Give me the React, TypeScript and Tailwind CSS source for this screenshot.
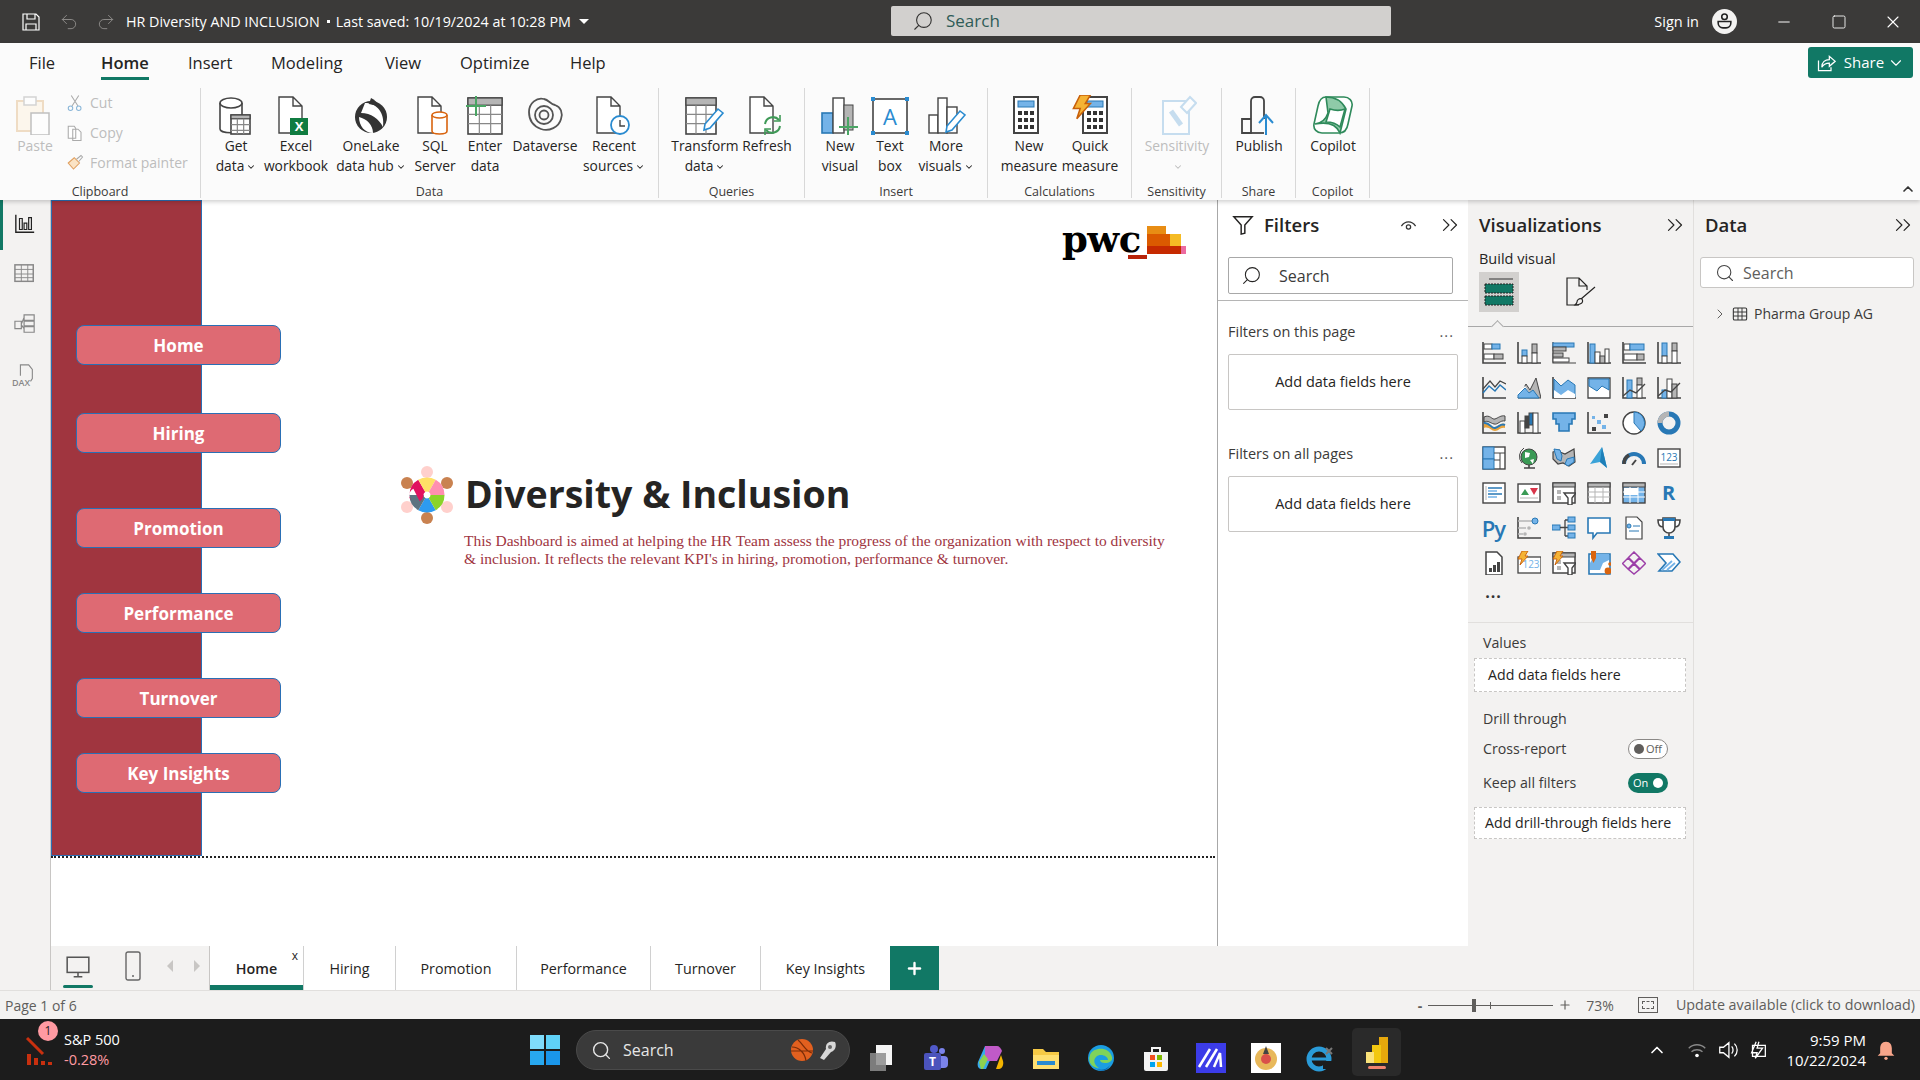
import type { ReactNode } from "react";
import { ChevronDown, ChevronRight, ChevronUp, ChevronsRight, Minus, Plus, Redo2, Search, Square, Undo2, X } from "lucide-react";

const D = "#444444";
const B = "#74b3e8";
const S = "#2878b5";
const G = "#b5b5b5";
const Y = "#e8a33d";

const Ic = ({ size = 24, view = 24, children }: { size?: number; view?: number; children: ReactNode }) => (
  <svg width={size} height={size} viewBox={`0 0 ${view} ${view}`} fill="none" className="shrink-0">
    {children}
  </svg>
);

const Axis = () => <path d="M1 1v21h23" stroke={D} strokeWidth="1.6" />;
const Bar = ({ x, y, w, h, c = "#fff", s = D }: { x: number; y: number; w: number; h: number; c?: string; s?: string }) => (
  <rect x={x} y={y} width={w} height={h} fill={c} stroke={s} strokeWidth="1" />
);
const Bolt = ({ x = 0, y = 0 }: { x?: number; y?: number }) => (
  <path transform={`translate(${x} ${y})`} d="M5 0h6L8 5h3L3 14l2-6H1z" fill="#f5b335" stroke="#c8600a" strokeWidth=".9" />
);
const Slicer = () => (
  <>
    <rect x="1" y="2" width="22" height="20" fill="#fff" stroke={D} strokeWidth="1.5" />
    <rect x="1" y="2" width="22" height="4" fill={G} stroke={D} />
    <rect x="5" y="9" width="4" height="4" fill={G} />
    <rect x="5" y="15" width="4" height="4" fill={G} />
    <path d="M12 12h12l-4 5v7h-4v-7z" fill="#fff" stroke={D} strokeWidth="1.4" />
  </>
);

// Visualization pane, row by row
const vizIcons: ReactNode[] = [
  <><Axis /><Bar x={2} y={3} w={8} h={5} /><Bar x={10} y={3} w={8} h={5} c={B} s={S} /><Bar x={2} y={13} w={10} h={5} /><Bar x={12} y={13} w={9} h={5} c={G} /></>,
  <><Axis /><Bar x={5} y={9} w={5} h={6} c={B} s={S} /><Bar x={5} y={15} w={5} h={7} /><Bar x={15} y={3} w={5} h={9} c={G} /><Bar x={15} y={12} w={5} h={10} /></>,
  <><path d="M1 1v21h23" stroke={D} strokeWidth="1.2" /><Bar x={1} y={2} w={21} h={4} c={B} s={S} /><Bar x={1} y={6} w={13} h={4} c={G} /><Bar x={1} y={12} w={10} h={4} c={G} /><Bar x={1} y={17} w={16} h={4} /></>,
  <><Axis /><Bar x={3} y={3} w={5} h={19} c={B} s={S} /><Bar x={8} y={11} w={5} h={11} /><Bar x={13} y={15} w={5} h={7} c={G} /><Bar x={18} y={8} w={4} h={14} /></>,
  <><Axis /><Bar x={2} y={3} w={6} h={6} /><Bar x={8} y={3} w={14} h={6} c={B} s={S} /><Bar x={2} y={13} w={13} h={6} /><Bar x={15} y={13} w={7} h={6} c={G} /></>,
  <><Axis /><Bar x={5} y={2} w={5} h={13} c={B} s={S} /><Bar x={5} y={15} w={5} h={7} /><Bar x={15} y={2} w={5} h={8} c={G} /><Bar x={15} y={10} w={5} h={12} /></>,
  <><Axis /><path d="M1 17l6-7 6 5 5-6 6 5" stroke={S} strokeWidth="1.4" /><path d="M1 13l7-8 5 6 5-6 6 3" stroke={D} strokeWidth="1.2" /></>,
  <><path d="M1 22L9 8l4 6 6-12 5 20z" fill={G} stroke={D} /><path d="M1 22v-6l7-6 7 12z" fill="#fff" /><path d="M1 22v-3l7-7 4 5 4-3 6 8z" fill={B} stroke={S} /></>,
  <><Axis /><path d="M2 3l7 7 7-6 7 5v12H2z" fill={B} stroke={S} /><path d="M2 14l7 5 7-5 7 4v4H2z" fill="#fff" /></>,
  <><path d="M1 2h22v20H1z" fill="#fff" stroke={D} strokeWidth="1.3" /><path d="M2 3h20v11l-7-4-5 5-8-5z" fill={B} stroke={S} /></>,
  <><Axis /><Bar x={5} y={4} w={5} h={18} c={B} s={S} /><Bar x={15} y={2} w={5} h={7} c={G} /><Bar x={15} y={9} w={5} h={13} /><path d="M1 20l7-6 6 3 9-9" stroke={D} strokeWidth="1.4" /></>,
  <><Axis /><Bar x={5} y={14} w={5} h={8} c={B} s={S} /><Bar x={10} y={3} w={5} h={19} /><Bar x={15} y={8} w={5} h={14} c={G} /><path d="M1 20l7-6 6 2 9-9" stroke={D} strokeWidth="1.4" /></>,
  <><Axis /><path d="M2 6c6-3 8 3 11 2s6-4 10-3v5c-5-1-7 4-11 3S6 9 2 11z" fill={G} stroke={D} /><path d="M2 13c5-2 7 4 11 3s6-5 10-3v4c-5-1-6 3-10 3s-6-5-11-3z" fill={Y} /><path d="M2 12c6-1 7 6 11 5s6-5 10-3" stroke={S} strokeWidth="2" /></>,
  <><Axis /><Bar x={3} y={10} w={5} h={12} /><Bar x={8} y={5} w={4} h={12} c={D} /><Bar x={12} y={2} w={4} h={12} c={S} /><Bar x={16} y={2} w={5} h={20} /></>,
  <path d="M1 2h22v6h-3v5h-3v7H7v-7H4V8H1z" fill={B} stroke={S} strokeWidth="1.6" />,
  <><Axis /><rect x="5" y="16" width="4" height="4" fill={D} /><rect x="5" y="5" width="3" height="3" fill={B} /><rect x="10" y="9" width="4" height="4" fill={B} /><rect x="15" y="14" width="4" height="4" fill={B} /><rect x="17" y="3" width="4" height="4" fill={D} /></>,
  <><circle cx="12" cy="12" r="11" fill="#fff" stroke={D} strokeWidth="1.4" /><path d="M12 1a11 11 0 0 1 7 19l-7-8z" fill={B} stroke={S} /></>,
  <><circle cx="12" cy="12" r="9" stroke={S} strokeWidth="5" /><path d="M12 3a9 9 0 0 0-9 9" stroke={G} strokeWidth="5" /></>,
  <><rect x="1" y="1" width="22" height="22" fill="#fff" stroke={D} strokeWidth="1.4" /><rect x="1" y="1" width="11" height="12" fill={B} stroke={S} /><rect x="1" y="13" width="11" height="10" fill={B} stroke={S} /><path d="M12 7h11M18 7v16M12 14h6" stroke={D} /></>,
  <><circle cx="12" cy="11" r="8" fill="#3a9a55" stroke={D} /><path d="M8 6l5 1-1 4-4 1zM13 14l4-1-1 5z" fill="#fff" /><path d="M7 22h11M12 19v3" stroke={D} strokeWidth="1.6" /><path d="M7 2a10 10 0 0 0-2 15" stroke={D} /></>,
  <><path d="M1 6l6-2 1 2 5 2 9-5 1 13-6 4-6-3-5 1-5-5z" fill={G} stroke={D} strokeWidth="1.2" /><path d="M2 3l6 1 2 6-1 5-4-2-2-6z" fill={B} stroke={S} /><path d="M13 18l2-5 7-2 0 5-6 4z" fill={B} stroke={S} /></>,
  <><path d="M15 1l5 21-7-6-10 2z" fill="#3ba3d8" /><path d="M15 1l-2 15 7 6z" fill="#1d7fb8" /></>,
  <><path d="M2 18a10 10 0 0 1 20 0" stroke={S} strokeWidth="4" /><path d="M2 18a10 10 0 0 1 5-9" stroke={D} strokeWidth="3.5" /><path d="M10 19l4-5" stroke={D} strokeWidth="2" /></>,
  <><rect x="1" y="3" width="22" height="18" fill="#fff" stroke={D} strokeWidth="1.4" /><text x="12" y="15" textAnchor="middle" fontSize="10" fill={S} fontFamily="Open Sans">123</text><path d="M3 18h18" stroke={G} /></>,
  <><rect x="1" y="2" width="22" height="20" fill="#fff" stroke={D} strokeWidth="1.4" /><path d="M4 5v14" stroke={G} /><path d="M6 7h14M6 13h14" stroke={S} strokeWidth="1.6" /><path d="M6 10h9M6 16h9" stroke={B} strokeWidth="1.4" /></>,
  <><rect x="1" y="3" width="22" height="18" fill="#fff" stroke={D} strokeWidth="1.4" /><path d="M4 14l4-6 4 6z" fill="#3a9a55" /><path d="M13 7h8l-4 7z" fill="#d9354a" /><path d="M3 17h18" stroke={G} /></>,
  <Slicer />,
  <><rect x="1" y="2" width="22" height="20" fill="#fff" stroke={D} strokeWidth="1.4" /><rect x="1" y="2" width="22" height="4" fill={G} stroke={D} /><path d="M8 6v16M16 6v16M1 11h22M1 16h22" stroke={G} /></>,
  <><rect x="1" y="2" width="22" height="20" fill={B} stroke={D} strokeWidth="1.4" /><rect x="1" y="2" width="22" height="4" fill={G} stroke={D} /><rect x="2" y="7" width="14" height="7" fill="#fff" /><path d="M8 6v16M16 6v16M1 11h22M1 16h22" stroke="#fff" /></>,
  <span className="text-[20px] font-bold leading-none text-[#2878b5]">R</span>,
  <span className="text-[22px] font-semibold leading-none text-[#2878b5] tracking-[-1px]">Py</span>,
  <><Axis /><path d="M1 5h14M1 12h8M1 18h5" stroke={G} strokeWidth="1.6" /><circle cx="18" cy="5" r="3" fill={B} stroke={S} /><circle cx="12" cy="12" r="1.8" fill={G} /><circle cx="8" cy="18" r="1.8" fill={G} /></>,
  <><rect x="0" y="9" width="8" height="5" fill={B} stroke={S} /><path d="M8 11.5h5M13 4v16M13 4h3M13 11.5h3M13 20h3" stroke={D} strokeWidth="1.3" /><rect x="16" y="1" width="7" height="5" fill={B} stroke={S} /><rect x="16" y="9" width="7" height="5" fill={B} stroke={S} /><rect x="16" y="17" width="7" height="5" fill={B} stroke={S} /></>,
  <path d="M1 2h22v15H10l-4 5v-5H1z" fill="#fff" stroke={S} strokeWidth="1.6" />,
  <><path d="M4 1h11l5 5v17H4z" fill="#fff" stroke={D} strokeWidth="1.2" /><circle cx="7" cy="10" r="2" fill={B} stroke={S} /><path d="M11 10h7M7 15h10" stroke={S} /></>,
  <><path d="M6 2h12v9a6 6 0 0 1-12 0zM6 4H1c0 5 2 7 5 7M18 4h5c0 5-2 7-5 7M12 17v3" stroke={D} strokeWidth="1.6" fill="#fff" /><rect x="6" y="2" width="12" height="3" fill={S} /><rect x="7" y="20" width="10" height="3" fill={S} /></>,
  <><path d="M4 1h11l5 5v18H4z" fill="#fff" stroke={D} strokeWidth="1.5" /><rect x="7" y="17" width="3" height="4" fill={D} /><rect x="11" y="14" width="3" height="7" fill={D} /><rect x="15" y="11" width="3" height="10" fill={D} /></>,
  <><rect x="1" y="6" width="23" height="16" fill="#fff" stroke={D} strokeWidth="1.3" /><text x="14" y="17" textAnchor="middle" fontSize="10" fill={B} fontFamily="Open Sans">123</text><Bolt /></>,
  <><Slicer /><Bolt /></>,
  <><path d="M2 3h21v20H2z" fill="#fff" stroke={S} strokeWidth="1.6" /><path d="M8 3h14v6l-6 3-3 7H3v-7z" fill={B} /><path d="M4 0h5v7l-2.5 5L4 7z" fill="#d9640f" /><circle cx="21" cy="20" r="3.4" fill="#d9640f" /><circle cx="23" cy="13" r="1.8" fill="#d9640f" /></>,
  <path d="M12 1l5.5 5.500L12 12 6.500 6.500zM6 7l5.500 5.500L6 18 .5 12.500zM18 7l5.500 5.500L18 18l-5.500-5.500zM12 13l5.500 5.500L12 23l-5.500-4.500z" stroke="#9c3fa8" strokeWidth="1.5" />,
  <><path d="M1 3h15l7 8-8 9H2l7-8z" stroke={S} strokeWidth="1.6" fill="#fff" /><path d="M5 19l10-9M10 19l8-7" stroke={B} strokeWidth="1.8" /></>,
];

const RibDoc = () => <path d="M3 2h14l9 9v27H3z M17 2v9h9" fill="#fff" stroke={D} strokeWidth="1.4" />;
const RibTable = ({ x, y, w, h }: { x: number; y: number; w: number; h: number }) => (
  <g stroke={D} strokeWidth="1.2">
    <rect x={x} y={y} width={w} height={h} fill="#fff" strokeWidth="1.6" />
    <rect x={x} y={y} width={w} height={h / 5} fill={G} />
    <path d={`M${x + w / 3} ${y + h / 5}v${(4 * h) / 5}M${x + (2 * w) / 3} ${y + h / 5}v${(4 * h) / 5}M${x} ${y + (2 * h) / 5 + 2}h${w}M${x} ${y + (3 * h) / 5 + 4}h${w}`} stroke="#888" />
  </g>
);
const Pencil = ({ x, y }: { x: number; y: number }) => (
  <path transform={`translate(${x} ${y})`} d="M14 0l5 4L6 19l-6 2 1-6z" fill="#fff" stroke="#2a8bd0" strokeWidth="1.6" />
);
const Calc = ({ x = 0, fill = B }: { x?: number; fill?: string }) => (
  <g transform={`translate(${x} 0)`}>
    <rect x="5" y="2" width="24" height="36" fill="#fff" stroke={D} strokeWidth="2" />
    <rect x="9" y="6" width="16" height="6" fill={fill} stroke={S} />
    {[16, 23, 30].map((y) => [9, 15, 21].map((cx) => <rect key={`${y}-${cx}`} x={cx} y={y} width="4" height="4" fill="#333" />))}
  </g>
);

const ribbonIcons: Record<string, ReactNode> = {
  get: (<><path d="M4 8v26c0 5 22 5 22 0V8" fill="#fff" stroke={D} strokeWidth="1.6" /><ellipse cx="15" cy="8" rx="11" ry="5" fill="#fff" stroke={D} strokeWidth="1.6" /><RibTable x={15} y={20} w={19} h={19} /></>),
  excel: (<><RibDoc /><rect x="14" y="23" width="18" height="17" fill="#107c41" /><text x="23" y="36" textAnchor="middle" fontSize="13" fontWeight="700" fill="#fff" fontFamily="Open Sans">X</text></>),
  lake: (<><circle cx="20" cy="22" r="16" fill="#333" /><path d="M14 8c12 0 20 10 18 24-4-8-12-14-22-14zM8 22c8 2 14 8 14 16-8 0-14-7-14-16z" fill="#fff" /><path d="M20 3c4 2 6 4 7 8l-9-2z" fill="#333" /></>),
  sql: (<><RibDoc /><path d="M17 20v16c0 4 15 4 15 0V20" fill="#fff" stroke="#d9640f" strokeWidth="1.6" /><ellipse cx="24.500" cy="20" rx="7.500" ry="3" fill="#fff" stroke="#d9640f" strokeWidth="1.6" /></>),
  enter: (<><RibTable x={3} y={3} w={34} h={36} /><path d="M1 11h20M11 1v20" stroke="#4aa564" strokeWidth="2" /></>),
  verse: (<g stroke="#555" strokeWidth="1.800"><path d="M4 17c0-9 8-15 15-13 5 1 6 5 11 6 6 2 8 8 6 14-2 8-12 13-20 10C8 31 4 26 4 17z" /><circle cx="19" cy="20" r="9" /><circle cx="19" cy="20" r="4.500" /></g>),
  recent: (<><RibDoc /><circle cx="26" cy="30" r="9" fill="#fff" stroke="#2a8bd0" strokeWidth="1.800" /><path d="M26 25v6h5" stroke={D} strokeWidth="1.4" /></>),
  transform: (<><RibTable x={1} y={3} w={30} h={36} /><Pencil x={19} y={14} /></>),
  refresh: (<><RibDoc /><path d="M18 29a8 8 0 0 1 14-4M33 31a8 8 0 0 1-14 4" stroke="#3f9a57" strokeWidth="2" /><path d="M33 20v6h-6M18 40v-6h6" stroke="#3f9a57" strokeWidth="1.600" /></>),
  newVisual: (<><rect x="2" y="18" width="11" height="20" fill={B} stroke={S} strokeWidth="1.600" /><rect x="13" y="3" width="11" height="35" fill="#fff" stroke={D} strokeWidth="1.400" /><rect x="24" y="10" width="9" height="25" fill={G} stroke={D} /><path d="M19 32h19M28 22v19" stroke="#4aa564" strokeWidth="2" /></>),
  textBox: (<><rect x="3" y="4" width="34" height="34" fill="#fff" stroke={D} strokeWidth="1.600" />{[[3, 4], [37, 4], [3, 38], [37, 38]].map(([x, y]) => <rect key={`${x}${y}`} x={x - 2} y={y - 2} width="4" height="4" fill="#2a8bd0" />)}<text x="20" y="30" textAnchor="middle" fontSize="22" fill="#2a8bd0" fontFamily="Open Sans">A</text></>),
  moreVisuals: (<><rect x="3" y="20" width="9" height="18" fill="#fff" stroke={D} strokeWidth="1.400" /><rect x="12" y="3" width="9" height="35" fill="#fff" stroke={D} strokeWidth="1.400" /><rect x="21" y="12" width="10" height="26" fill="#fff" stroke={D} strokeWidth="1.400" /><Pencil x={20} y={16} /></>),
  measure: <Calc />,
  quick: (<><Calc x={8} /><g transform="scale(1.700)"><Bolt x={1} y={0} /></g></>),
  sens: (<g opacity=".55"><rect x="6" y="6" width="26" height="33" fill="#fff" stroke="#9cc6e6" strokeWidth="2" /><path d="M14 16l10 14" stroke="#9cc6e6" strokeWidth="5" /><path d="M24 12l9-10 6 6-9 10z" fill="#fff" stroke="#9cc6e6" strokeWidth="2" /></g>),
  publish: (<><path d="M3 38V24h9v14zM12 24V6a4 4 0 0 1 4-4h5a4 4 0 0 1 4 4v18" stroke={D} strokeWidth="1.800" /><path d="M3 38h22" stroke={D} strokeWidth="1.800" /><path d="M27 40V20M20 28l7-8 7 8" stroke="#2a8bd0" strokeWidth="2" /></>),
  copilot: (<g stroke="#2f8a5b" strokeWidth="1.600"><path d="M13 2h18c5 0 9 4 8 9l-4 18c-1 6-4 9-9 9H9c-5 0-9-4-8-9L5 11c1-5 3-9 8-9z" fill="#fff" /><path d="M13 2c9 0 16 4 20 12l-6 24c-3-7-10-12-25-9 8-1 11-5 13-11z" fill="#8fcaa8" /><path d="M17 14c6 2 10 2 15 0l-5 18c-3-3-7-5-14-5z" fill="#fff" /></g>),
};

type Btn = { icon: string; lines: [string, string?]; w: string; caret?: boolean; muted?: boolean };
const groups: { label: string; w: string; btns: Btn[] }[] = [
  {
    label: "Data",
    w: "w-[458px]",
    btns: [
      { icon: "get", lines: ["Get", "data"], w: "w-[60px]", caret: true },
      { icon: "excel", lines: ["Excel", "workbook"], w: "w-[60px]" },
      { icon: "lake", lines: ["OneLake", "data hub"], w: "w-[90px]", caret: true },
      { icon: "sql", lines: ["SQL", "Server"], w: "w-[38px]" },
      { icon: "enter", lines: ["Enter", "data"], w: "w-[62px]" },
      { icon: "verse", lines: ["Dataverse"], w: "w-[58px]" },
      { icon: "recent", lines: ["Recent", "sources"], w: "w-[80px]", caret: true },
    ],
  },
  {
    label: "Queries",
    w: "w-[146px]",
    btns: [
      { icon: "transform", lines: ["Transform", "data"], w: "w-[82px]", caret: true },
      { icon: "refresh", lines: ["Refresh"], w: "w-[42px]" },
    ],
  },
  {
    label: "Insert",
    w: "w-[183px]",
    btns: [
      { icon: "newVisual", lines: ["New", "visual"], w: "w-[60px]" },
      { icon: "textBox", lines: ["Text", "box"], w: "w-[40px]" },
      { icon: "moreVisuals", lines: ["More", "visuals"], w: "w-[72px]", caret: true },
    ],
  },
  {
    label: "Calculations",
    w: "w-[144px]",
    btns: [
      { icon: "measure", lines: ["New", "measure"], w: "w-[72px]" },
      { icon: "quick", lines: ["Quick", "measure"], w: "w-[50px]" },
    ],
  },
  { label: "Sensitivity", w: "w-[90px]", btns: [{ icon: "sens", lines: ["Sensitivity", ""], w: "w-[80px]", caret: true, muted: true }] },
  { label: "Share", w: "w-[74px]", btns: [{ icon: "publish", lines: ["Publish"], w: "w-[64px]" }] },
  { label: "Copilot", w: "w-[74px]", btns: [{ icon: "copilot", lines: ["Copilot"], w: "w-[64px]" }] },
];

const Caret = () => <ChevronDown size={10} strokeWidth={2.500} className="inline-block ml-[2px] mb-[1px]" />;

function RibbonButton({ b }: { b: Btn }) {
  return (
    <div className={`${b.w} flex flex-col items-center shrink-0 whitespace-nowrap text-[13.800px] leading-[20px] ${b.muted ? "text-[#bdbdbd]" : "text-[#252423]"}`}>
      <div className="h-[40px] w-[40px] flex items-center justify-center">
        <Ic size={40} view={40}>{ribbonIcons[b.icon]}</Ic>
      </div>
      <div className="mt-[1px]">{b.lines[0]}</div>
      {b.lines[1] !== undefined && (
        <div>
          {b.lines[1]}
          {b.caret && <Caret />}
        </div>
      )}
    </div>
  );
}

function Ribbon() {
  return (
    <div className="relative z-10 h-[157px] shrink-0 bg-[#fbfbfb] shadow-[0_2px_4px_rgba(0,0,0,0.18)]">
      <div className="flex h-[45px] items-center pb-[5px] pl-[29px] text-[16.5px] text-[#252423]">
        <div className="w-[72px]">File</div>
        <div className="relative w-[87px] font-semibold">
          Home
          <div className="absolute left-0 top-[26px] h-[3px] w-[48px] bg-[#117865]" />
        </div>
        <div className="w-[83px]">Insert</div>
        <div className="w-[114px]">Modeling</div>
        <div className="w-[75px]">View</div>
        <div className="w-[110px]">Optimize</div>
        <div>Help</div>
      </div>
      <div className="flex h-[110px]">
        <div className="relative flex h-full w-[201px] shrink-0 flex-col border-r border-[#d8d8d8] pt-[7px]">
          <div className="flex text-[14px] text-[#bdbdbd]">
            <div className="flex w-[62px] flex-col items-center pl-[8px]">
              <Ic size={40} view={40}>
                <g opacity=".6">
                  <rect x="2" y="6" width="26" height="30" fill="#fdf3e3" stroke="#e8c9a0" strokeWidth="2" />
                  <rect x="9" y="2" width="12" height="8" fill="#fff" stroke="#bbb" strokeWidth="1.500" />
                  <rect x="16" y="18" width="18" height="22" fill="#fff" stroke="#999" strokeWidth="1.500" />
                </g>
              </Ic>
              <div className="mt-[1px] leading-[20px]">Paste</div>
            </div>
            <div className="ml-[4px] -mt-[2px] flex flex-col gap-[11px] whitespace-nowrap leading-[19px]">
              <div className="flex items-center gap-[6px]">
                <Ic size={18}><path d="M7 2l9 14M17 2L8 16" stroke="#aaa" strokeWidth="1.400" /><circle cx="6" cy="19" r="3" stroke="#8ab6d8" strokeWidth="1.400" /><circle cx="17" cy="19" r="3" stroke="#8ab6d8" strokeWidth="1.400" /></Ic>
                Cut
              </div>
              <div className="flex items-center gap-[6px]">
                <Ic size={18}><path d="M3 3h8l2 3v13H3zM9 7h7l4 4v11H9z" fill="#fff" stroke="#aaa" strokeWidth="1.400" /></Ic>
                Copy
              </div>
              <div className="flex items-center gap-[6px]">
                <Ic size={18}><path d="M3 12l8-7 7 7-8 8z" fill="#fbe3c4" stroke="#e0a060" strokeWidth="1.400" /><path d="M14 7l6-5 2 2-5 6" stroke="#aaa" strokeWidth="1.400" /></Ic>
                Format painter
              </div>
            </div>
          </div>
          <div className="absolute bottom-[-2px] left-0 w-full text-center text-[12.500px] leading-[16px] text-[#3b3a39]">Clipboard</div>
        </div>
        {groups.map((g) => (
          <div key={g.label} className={`${g.w} relative flex h-full shrink-0 border-r border-[#d8d8d8] pl-[5px] pt-[7px]`}>
            {g.btns.map((b) => (
              <RibbonButton key={b.icon} b={b} />
            ))}
            <div className="absolute bottom-[-2px] left-0 w-full text-center text-[12.500px] leading-[16px] text-[#3b3a39]">{g.label}</div>
          </div>
        ))}
      </div>
      <button className="absolute right-[7px] top-[4px] flex h-[31px] w-[105px] items-center justify-center gap-[8px] rounded-[3px] bg-[#117865] text-[15px] text-white">
        <Ic size={20}>
          <path d="M3 9v12h15v-4" stroke="#fff" strokeWidth="1.500" />
          <path d="M7 17c0-6 4-9 9-9V4l7 6-7 6v-4c-4 0-7 1-9 5z" stroke="#fff" strokeWidth="1.500" />
        </Ic>
        Share
        <ChevronDown size={18} strokeWidth={1.500} className="-ml-[5px]" />
      </button>
      <ChevronUp size={16} strokeWidth={2.500} className="absolute right-[4px] top-[138px] text-[#333]" />
    </div>
  );
}

function TitleBar() {
  return (
    <div className="relative flex h-[43px] shrink-0 items-center bg-[#3b3a39] text-white">
      <div className="ml-[22px] w-[18px]">
        <Ic size={18} view={18}>
          <path d="M1 1h13l3 3v13H1zM4 17v-6h10v6M5 1v5h8V1" stroke="#fff" strokeWidth="1.200" />
        </Ic>
      </div>
      <Undo2 size={20} strokeWidth={1.200} className="ml-[19px] text-[#8a8886]" />
      <Redo2 size={20} strokeWidth={1.200} className="ml-[17px] text-[#8a8886]" />
      <div className="ml-[10px] whitespace-nowrap text-[14.300px]">HR Diversity AND INCLUSION</div>
      <div className="ml-[7px] h-[3px] w-[3px] bg-white" />
      <div className="ml-[6px] whitespace-nowrap text-[14.300px]">Last saved: 10/19/2024 at 10:28 PM</div>
      <div className="ml-[8px] h-0 w-0 border-x-[5px] border-t-[5px] border-x-transparent border-t-white" />
      <div className="absolute left-[891px] top-[6px] flex h-[30px] w-[500px] items-center rounded-[2px] bg-[#d2d0ce] pl-[21px] text-[17px] text-[#2f5c57]">
        <Search size={22} strokeWidth={1.200} className="-scale-x-100 text-[#323130]" />
        <span className="ml-[12px]">Search</span>
      </div>
      <div className="ml-auto flex items-center">
        <span className="text-[14.500px]">Sign in</span>
        <div className="ml-[13px] flex h-[25px] w-[25px] items-center justify-center rounded-full bg-[#f3f2f1]">
          <Ic size={19}>
            <circle cx="12" cy="6" r="3.500" stroke="#222" strokeWidth="2" />
            <path d="M4 12h16v2a6 6 0 0 1-6 6h-4a6 6 0 0 1-6-6z" stroke="#222" strokeWidth="2" />
          </Ic>
        </div>
        <Minus size={18} strokeWidth={1.300} className="ml-[38px]" />
        <Square size={16} strokeWidth={1.300} className="ml-[38px]" />
        <X size={20} strokeWidth={1.300} className="ml-[36px] mr-[17px]" />
      </div>
    </div>
  );
}

const navButtons = [
  { label: "Home", top: "top-[125px]" },
  { label: "Hiring", top: "top-[213px]" },
  { label: "Promotion", top: "top-[308px]" },
  { label: "Performance", top: "top-[393px]" },
  { label: "Turnover", top: "top-[478px]" },
  { label: "Key Insights", top: "top-[553px]" },
];

function Canvas() {
  return (
    <div className="relative min-h-0 w-[1166px] shrink-0 overflow-hidden bg-white">
      <div className="absolute left-0 top-0 h-[656px] w-[151px] border border-[#2a6fb5] bg-[#a0353f]" />
      {navButtons.map((n) => (
        <div
          key={n.label}
          className={`${n.top} absolute left-[25px] flex h-[40px] w-[205px] items-center justify-center rounded-[8px] border border-[#2a6fb5] bg-[#de6a73] pt-[1px] text-[17px] font-bold text-white`}
        >
          {n.label}
        </div>
      ))}
      <div className="absolute left-0 top-[656px] w-[1164px] border-t-2 border-dotted border-[#222]" />
      {/* pwc logo */}
      <div className="absolute left-[1011px] top-[17px] font-['DejaVu_Serif',serif] text-[37px] font-bold leading-[44px] tracking-[-0.5px] text-black">pwc</div>
      <div className="absolute left-[1077px] top-[25px]">
        <svg width="58" height="34" viewBox="0 0 58 34">
          <rect x="0" y="30" width="19" height="4" fill="#b8230a" />
          <rect x="19" y="1" width="19" height="28" fill="#e88d14" />
          <rect x="19" y="9" width="23" height="20" fill="#db5a00" />
          <rect x="42" y="9" width="11" height="20" fill="#f5bb24" />
          <rect x="19" y="21" width="34" height="8" fill="#c62a00" />
          <rect x="53" y="21" width="6" height="8" fill="#ec6aa0" />
        </svg>
      </div>
      {/* title block */}
      <div className="absolute left-[349px] top-[265px]">
        <svg width="54" height="60" viewBox="0 0 54 60">
          {[[27, 7, "#ffd0cc"], [7, 18, "#c98250"], [47, 18, "#c98250"], [7, 42, "#ffd0cc"], [47, 42, "#ffd0cc"], [27, 53, "#c98250"]].map(([x, y, c]) => (
            <circle key={`${x}-${y}`} cx={x as number} cy={y as number} r="6" fill={c as string} />
          ))}
          {["#2d9bf0", "#5d7380", "#e0115f", "#ffe066", "#ff8fb0", "#8bd32a"].map((c, i) => (
            <circle key={c} cx="27" cy="30" r="10.500" stroke={c} strokeWidth="14" fill="none" pathLength={60} strokeDasharray="10 50" strokeDashoffset={-i * 10 + 50} />
          ))}
        </svg>
      </div>
      <div className="absolute left-[414px] top-[264px] whitespace-nowrap text-[37.500px] font-bold leading-[60px] text-[#252423]">Diversity &amp; Inclusion</div>
      <div className="absolute left-[413px] top-[332px] w-[760px] font-['Liberation_Serif',serif] text-[15.500px] leading-[18px] text-[#a0353f]">
        This Dashboard is aimed at helping the HR Team assess the progress of the organization with respect to diversity
        <br />
        &amp; inclusion. It reflects the relevant KPI's in hiring, promotion, performance &amp; turnover.
      </div>
    </div>
  );
}

function FiltersPane() {
  return (
    <div className="flex w-[251px] shrink-0 flex-col border-l border-[#a8a8a8] bg-white text-[#252423]">
      <div className="flex h-[50px] shrink-0 items-center pl-[14px]">
        <Ic size={22}>
          <path d="M2 3h20l-8 9v9l-4 1V12z" stroke="#252423" strokeWidth="1.600" />
        </Ic>
        <span className="ml-[10px] text-[18.500px] font-semibold">Filters</span>
        <div className="ml-auto mr-[20px]">
          <Ic size={17}>
            <path d="M2 13c5-8 15-8 20 0" stroke="#333" strokeWidth="1.800" />
            <circle cx="12" cy="14" r="3" stroke="#333" strokeWidth="1.800" />
          </Ic>
        </div>
        <ChevronsRight size={26} strokeWidth={1.100} className="mr-[5px]" />
      </div>
      <div className="h-[51px] shrink-0 border-b border-[#b5b5b5] pl-[10px]">
        <div className="mt-[7px] flex h-[37px] w-[225px] items-center rounded-[2px] border border-[#a8a8a8] pl-[12px] text-[16px]">
          <Search size={21} strokeWidth={1.200} className="-scale-x-100" />
          <span className="ml-[17px] text-[#3b3a39]">Search</span>
        </div>
      </div>
      {["Filters on this page", "Filters on all pages"].map((t) => (
        <div key={t} className="h-[122px] shrink-0 pl-[10px] pr-[10px] pt-[20px]">
          <div className="flex h-[22px] items-center justify-between pr-[4px] text-[14.500px] text-[#3b3a39]">
            {t}
            <span className="tracking-[1px] text-[#555]">...</span>
          </div>
          <div className="mt-[11px] flex h-[56px] w-[230px] items-center justify-center rounded-[2px] border border-[#c8c6c4] text-[14.500px]">Add data fields here</div>
        </div>
      ))}
    </div>
  );
}

function VizPane() {
  return (
    <div className="flex h-full w-[226px] shrink-0 flex-col border-r border-[#e1dfdd] bg-[#f3f2f1] text-[#252423]">
      <div className="flex h-[50px] shrink-0 items-center justify-between pl-[11px] pr-[5px]">
        <span className="text-[18.500px] font-semibold">Visualizations</span>
        <ChevronsRight size={26} strokeWidth={1.100} />
      </div>
      <div className="-mt-[1px] pl-[11px] text-[14.500px] leading-[19px]">Build visual</div>
      <div className="relative h-[59px] shrink-0 border-b border-[#a8a8a8] pl-[11px] pt-[4px]">
        <div className="flex items-start">
          <div className="flex h-[40px] w-[40px] items-center justify-center bg-[#d2d0ce]">
            <Ic size={30} view={30}>
              <path d="M5 2h24" stroke="#333" />
              <rect x="1" y="7" width="28" height="9" fill="#117865" stroke="#222" strokeDasharray="2 1" />
              <rect x="1" y="19" width="28" height="9" fill="#117865" stroke="#222" strokeDasharray="2 1" />
            </Ic>
          </div>
          <div className="ml-[47px] mt-[5px]">
            <Ic size={30} view={30}>
              <path d="M13 28H1V1h12l8 8v4M13 1v8h8" stroke="#252423" strokeWidth="1.200" />
              <path d="M29 10L15 22M9 28c2 0 3 0 5-1 3-1 3-3 2-5-3-1-5 1-5 3 0 1-1 2-2 3z" stroke="#252423" strokeWidth="1.200" />
            </Ic>
          </div>
        </div>
        <div className="absolute bottom-[-5px] left-[25px] h-[9px] w-[9px] rotate-45 border-l border-t border-[#a8a8a8] bg-[#f3f2f1]" />
      </div>
      <div className="grid grid-cols-[repeat(6,35px)] auto-rows-[35px] pl-[8px] pt-[8px]">
        {vizIcons.map((v, i) => (
          <div key={i} className="flex items-center justify-center">
            {(v as { type?: unknown }).type === "span" ? v : <Ic>{v}</Ic>}
          </div>
        ))}
        <div className="flex items-center justify-center pb-[12px] font-bold tracking-[1px] text-[#333]">...</div>
      </div>
      <div className="mt-[7px] border-t border-[#e1dfdd] px-[6px] pt-[10px] text-[14.200px]">
        <div className="pl-[9px] leading-[20px] text-[#3b3a39]">Values</div>
        <div className="mt-[5px] flex h-[34px] w-[212px] items-center border border-dashed border-[#c8c6c4] bg-white pl-[13px]">Add data fields here</div>
        <div className="mt-[17px] pl-[9px] leading-[20px] text-[#3b3a39]">Drill through</div>
        <div className="mt-[9px] flex h-[22px] items-center justify-between pl-[9px] pr-[19px] text-[#3b3a39]">
          Cross-report
          <div className="flex h-[20px] w-[40px] items-center rounded-full border border-[#8a8886] bg-white pl-[5px] text-[11px] text-[#605e5c]">
            <div className="mr-[2px] h-[10px] w-[10px] rounded-full bg-[#605e5c]" />
            Off
          </div>
        </div>
        <div className="mt-[12px] flex h-[22px] items-center justify-between pl-[9px] pr-[19px] text-[#3b3a39]">
          Keep all filters
          <div className="flex h-[20px] w-[40px] items-center justify-between rounded-full bg-[#117865] px-[5px] text-[11px] text-white">
            On
            <div className="h-[10px] w-[10px] rounded-full bg-white" />
          </div>
        </div>
        <div className="mt-[13px] flex h-[32px] w-[212px] items-center border border-dashed border-[#c8c6c4] bg-white pl-[10px]">Add drill-through fields here</div>
      </div>
    </div>
  );
}

function DataPane() {
  return (
    <div className="h-full w-[226px] shrink-0 bg-[#f3f2f1] text-[#252423]">
      <div className="flex h-[50px] items-center justify-between pl-[11px] pr-[4px]">
        <span className="text-[18.500px] font-semibold">Data</span>
        <ChevronsRight size={26} strokeWidth={1.100} />
      </div>
      <div className="ml-[6px] mt-[7px] flex h-[31px] w-[214px] items-center rounded-[3px] border border-[#c8c6c4] bg-white pl-[14px] text-[16px] text-[#605e5c]">
        <Search size={20} strokeWidth={1.300} className="text-[#444]" />
        <span className="ml-[8px]">Search</span>
      </div>
      <div className="ml-[18px] mt-[15px] flex items-center text-[14px] text-[#3b3a39]">
        <ChevronRight size={16} strokeWidth={1.200} />
        <div className="ml-[4px]">
          <Ic size={16}>
            <rect x="2" y="3" width="20" height="18" rx="2" stroke="#333" strokeWidth="1.600" />
            <path d="M9 3v18M15 3v18M2 9h20M2 15h20" stroke="#333" strokeWidth="1.400" />
          </Ic>
        </div>
        <span className="ml-[6px]">Pharma Group AG</span>
      </div>
    </div>
  );
}

const pageTabs = [
  { label: "Hiring", w: "w-[92px]" },
  { label: "Promotion", w: "w-[121px]" },
  { label: "Performance", w: "w-[134px]" },
  { label: "Turnover", w: "w-[110px]" },
  { label: "Key Insights", w: "w-[130px]" },
];

function PageBar() {
  return (
    <div className="flex h-[44px] shrink-0 bg-[#f3f2f1] text-[14.300px] text-[#252423]">
      <div className="flex w-[159px] shrink-0 items-start border-r border-[#c8c6c4] pl-[12px] pt-[8px]">
        <div className="relative flex w-[30px] flex-col items-center">
          <Ic size={26}>
            <rect x="2" y="3" width="20" height="14" stroke="#555" strokeWidth="1.400" />
            <path d="M12 17v4M8 21h8" stroke="#555" strokeWidth="1.400" />
          </Ic>
          <div className="mt-[5px] h-[3px] w-[30px] rounded bg-[#117865]" />
        </div>
        <div className="ml-[32px] -mt-[3px]">
          <svg width="16" height="30" viewBox="0 0 16 30" fill="none">
            <rect x="1" y="1" width="14" height="28" rx="2" stroke="#666" strokeWidth="1.400" />
            <circle cx="8" cy="25" r="1" fill="#666" />
          </svg>
        </div>
        <div className="ml-[26px] mt-[6px] h-0 w-0 border-y-[6px] border-r-[6px] border-y-transparent border-r-[#c8c6c4]" />
        <div className="ml-[21px] mt-[6px] h-0 w-0 border-y-[6px] border-l-[6px] border-y-transparent border-l-[#c8c6c4]" />
      </div>
      <div className="relative flex w-[93px] shrink-0 items-center justify-center border-b-[5px] border-[#117865] bg-white pt-[6px] font-semibold">
        Home
        <span className="absolute right-[5px] top-[1px] text-[12px] font-normal">x</span>
      </div>
      {pageTabs.map((t) => (
        <div key={t.label} className={`${t.w} flex shrink-0 items-center justify-center border-l border-[#d0d0d0] bg-white pt-[2px]`}>
          {t.label}
        </div>
      ))}
      <div className="flex w-[49px] shrink-0 items-center justify-center bg-[#117865]">
        <Plus size={19} strokeWidth={3} className="text-white" />
      </div>
    </div>
  );
}

function StatusBar() {
  return (
    <div className="flex h-[29px] shrink-0 items-center border-t border-[#e1dfdd] bg-[#f3f2f1] pl-[5px] text-[14px] text-[#605e5c]">
      <span>Page 1 of 6</span>
      <div className="ml-auto flex items-center">
        <span className="mr-[6px] font-bold">-</span>
        <div className="relative h-[1px] w-[125px] bg-[#605e5c]">
          <div className="absolute left-[44px] top-[-6px] h-[13px] w-[4px] bg-[#605e5c]" />
          <div className="absolute left-[62px] top-[-3px] h-[7px] w-[1px] bg-[#605e5c]" />
        </div>
        <Plus size={14} strokeWidth={2} className="ml-[5px]" />
        <span className="ml-[14px]">73%</span>
        <div className="ml-[24px] flex h-[16px] w-[20px] items-center justify-center border border-[#605e5c] bg-[#f3f2f1]">
          <div className="h-[8px] w-[12px] border border-dashed border-[#605e5c]" />
        </div>
        <span className="ml-[18px] mr-[5px] text-[14.300px]">Update available (click to download)</span>
      </div>
    </div>
  );
}

const taskIcons: ReactNode[] = [
  <><rect x="10" y="2" width="16" height="20" fill="#f4f4f4" /><rect x="4" y="10" width="16" height="18" fill="#8d8d8d" opacity=".85" /></>,
  <><circle cx="21" cy="8" r="3" fill="#7b83eb" /><rect x="15" y="13" width="12" height="12" rx="4" fill="#7b83eb" /><circle cx="13" cy="6" r="4" fill="#5059c9" /><rect x="3" y="10" width="17" height="17" rx="2" fill="#4b53bc" /><text x="11.500" y="23" textAnchor="middle" fontSize="12" fontWeight="700" fill="#fff" fontFamily="Open Sans">T</text></>,
  <><path d="M9 3h12l-6 12-5 11H5C2 26 1 22 2 19z" fill="#36a9ec" /><path d="M9 3h12c2 0 4 2 5 5l-5 10H9z" fill="#c05ac8" /><path d="M15 26h8c3 0 5-4 4-8l-2-6-5 14z" fill="#f4b400" /><path d="M3 19l5-8 4 5-5 10H5z" fill="#8fd14f" /></>,
  <><path d="M2 6h10l3 3h13v17H2z" fill="#f6c945" /><rect x="2" y="12" width="26" height="14" fill="#ffdf70" /><rect x="6" y="18" width="18" height="4" fill="#2a8bd0" /></>,
  <><circle cx="15" cy="15" r="13" fill="#1b9de2" /><path d="M4 12c3-8 19-9 22 2 1 4-3 6-7 6-3 0-5-1-5-3h8c0-4-8-7-12-3-3 3-2 8 3 11C7 25 1 20 4 12z" fill="#7fd35b" /><path d="M8 24c3 3 11 5 16-2-3 7-11 7-16 2z" fill="#0c59a4" /></>,
  <><path d="M3 9h24v17a2 2 0 0 1-2 2H5a2 2 0 0 1-2-2z" fill="#f3f3f3" /><path d="M11 9V5h8v4" stroke="#f3f3f3" strokeWidth="2" /><rect x="9" y="12" width="5" height="5" fill="#f25022" /><rect x="16" y="12" width="5" height="5" fill="#7fba00" /><rect x="9" y="19" width="5" height="5" fill="#00a4ef" /><rect x="16" y="19" width="5" height="5" fill="#ffb900" /></>,
  <><rect x="0" y="0" width="30" height="30" fill="#3c3ce8" /><path d="M3 24L14 6M10 24L21 6M18 24l6-14 1 14" stroke="#fff" strokeWidth="2.500" /></>,
  <><rect x="0" y="0" width="30" height="30" fill="#fff" /><circle cx="15" cy="16" r="11" fill="#e8b85a" /><circle cx="15" cy="16" r="5" fill="#d9504a" /><path d="M15 3l3 8h-6z" fill="#444" /></>,
  <><circle cx="13" cy="16" r="10" stroke="#2a9bd8" strokeWidth="5" /><path d="M4 16h18" stroke="#2a9bd8" strokeWidth="3" /><rect x="17" y="18" width="10" height="8" fill="#1c1c1c" /><path d="M20 5l6 6M26 5l-6 6" stroke="#777" strokeWidth="2" /></>,
];

function Taskbar() {
  return (
    <div className="relative flex h-[61px] shrink-0 items-center bg-[#1c1c1c] text-white">
      <div className="relative ml-[25px] flex items-center">
        <Ic size={32} view={32}>
          <path d="M2 4l16 16" stroke="#c8300f" strokeWidth="3" />
          <path d="M2 20h4v11H2zM9 24h4v7H9zM16 27h4v4h-4zM23 28h4v3h-4z" fill="#c8300f" />
        </Ic>
        <div className="absolute left-[13px] top-[-9px] flex h-[20px] w-[20px] items-center justify-center rounded-full bg-[#ff9aa2] text-[12px] text-[#222]">1</div>
        <div className="ml-[7px] text-[14.500px] leading-[20px]">
          <div>S&amp;P 500</div>
          <div className="text-[#ff9aa2]">-0.28%</div>
        </div>
      </div>
      <div className="absolute left-[530px] top-[16px] grid h-[30px] w-[30px] grid-cols-2 gap-[1.500px]">
        <div className="bg-[#7fdcfb]" />
        <div className="bg-[#5fd2f8]" />
        <div className="bg-[#28a8ef]" />
        <div className="bg-[#1a96ea]" />
      </div>
      <div className="absolute left-[576px] top-[11px] flex h-[40px] w-[274px] items-center rounded-full border border-[#4a4a4a] bg-[#3a3a3a] pl-[14px] text-[16px] text-[#e6e6e6]">
        <Search size={21} strokeWidth={1.600} />
        <span className="ml-[11px]">Search</span>
        <div className="ml-auto mr-[10px] flex items-center gap-[1px]">
          <Ic size={24}>
            <circle cx="12" cy="12" r="11" fill="#e2601f" />
            <path d="M2 9c7 0 13 6 14 14M8 2c5 4 8 12 14 13M1 13h22" stroke="#7a2c08" strokeWidth="1.200" />
          </Ic>
          <Ic size={24}>
            <path d="M20 4c-5-2-10 1-9 7l-6 9 4 2 7-8c4-1 6-6 4-10z" fill="#d8d8d8" />
            <circle cx="15" cy="9" r="2" fill="#666" />
          </Ic>
        </div>
      </div>
      <div className="absolute left-[853px] top-[15px] flex">
        {taskIcons.map((t, i) => (
          <div key={i} className="flex w-[55px] items-center justify-center">
            <Ic size={30} view={30}>{t}</Ic>
          </div>
        ))}
        <div className="ml-[4px] flex h-[48px] w-[49px] -translate-y-[6px] flex-col items-center justify-center rounded-[5px] bg-[#2a2a2a]">
          <Ic size={30} view={30}>
            <rect x="17" y="2" width="9" height="26" fill="#e6a80c" />
            <rect x="10" y="10" width="9" height="18" fill="#f2c811" />
            <rect x="4" y="17" width="8" height="11" fill="#fae27a" />
          </Ic>
          <div className="mt-[1px] h-[3px] w-[18px] rounded bg-[#f0836f]" />
        </div>
      </div>
      <div className="ml-auto flex items-center pr-[24px]">
        <ChevronUp size={20} strokeWidth={2} />
        <div className="ml-[19px]">
          <Ic size={22}>
            <path d="M3 10c5-5 13-5 18 0M6 14c3-3 9-3 12 0" stroke="#888" strokeWidth="1.500" />
            <circle cx="12" cy="18" r="2" fill="#fff" />
          </Ic>
        </div>
        <div className="ml-[9px]">
          <Ic size={22}>
            <path d="M3 9h4l6-5v16l-6-5H3zM16 8c2 2 2 6 0 8M19 5c4 4 4 10 0 14" stroke="#fff" strokeWidth="1.400" />
          </Ic>
        </div>
        <div className="ml-[8px]">
          <Ic size={22}>
            <path d="M6 7h14v12H6zM10 3L5 15h6l-2 6 8-11h-6l2-7" stroke="#fff" strokeWidth="1.400" />
          </Ic>
        </div>
        <div className="ml-[17px] text-right text-[15px] leading-[20px]">
          <div>9:59 PM</div>
          <div>10/22/2024</div>
        </div>
        <div className="ml-[10px]">
          <Ic size={20}>
            <path d="M12 2c5 0 7 4 7 8v6l3 3H2l3-3v-6c0-4 2-8 7-8z" fill="#f8a58a" />
            <circle cx="12" cy="22" r="2" fill="#f8a58a" />
          </Ic>
        </div>
      </div>
    </div>
  );
}

export default function App() {
  return (
    <div className="flex h-[1080px] w-[1920px] flex-col overflow-hidden bg-white font-['Open_Sans','Noto_Sans',sans-serif]">
      <TitleBar />
      <Ribbon />
      <div className="flex min-h-0 flex-1">
        <div className="relative w-[51px] shrink-0 border-r border-[#c8c6c4] bg-[#f3f2f1]">
          <div className="absolute left-0 top-0 h-[50px] w-[3px] bg-[#117865]" />
          <div className="flex flex-col items-center gap-[28px] pt-[13px]">
            <Ic size={22}>
              <path d="M2 2v19h20" stroke="#222" strokeWidth="1.500" />
              <path d="M6 6h3v12H6zM11 11h3v7h-3zM16 5h3v13h-3z" stroke="#222" strokeWidth="1.300" />
            </Ic>
            <Ic size={22}>
              <rect x="1" y="2" width="20" height="18" stroke="#888" strokeWidth="1.600" />
              <path d="M1 7h20M1 12h20M1 16h20M8 2v18M15 2v18" stroke="#888" />
            </Ic>
            <Ic size={22}>
              <path d="M1 9h7v8H1zM11 2h11v6H11zM11 9h11v5H11zM11 15h11v6H11zM8 12l3-7M8 13l3 4" stroke="#888" strokeWidth="1.300" />
            </Ic>
            <div className="relative h-[22px] w-[22px]">
              <Ic size={22}>
                <path d="M7 14V2h9l4 5v10l-2 3" stroke="#888" strokeWidth="1.200" />
              </Ic>
              <span className="absolute bottom-[-2px] left-[-2px] text-[9px] font-semibold leading-none text-[#888]">DAX</span>
            </div>
          </div>
        </div>
        <div className="flex w-[1417px] shrink-0 flex-col">
          <div className="flex min-h-0 flex-1">
            <Canvas />
            <FiltersPane />
          </div>
          <PageBar />
        </div>
        <VizPane />
        <DataPane />
      </div>
      <StatusBar />
      <Taskbar />
    </div>
  );
}
